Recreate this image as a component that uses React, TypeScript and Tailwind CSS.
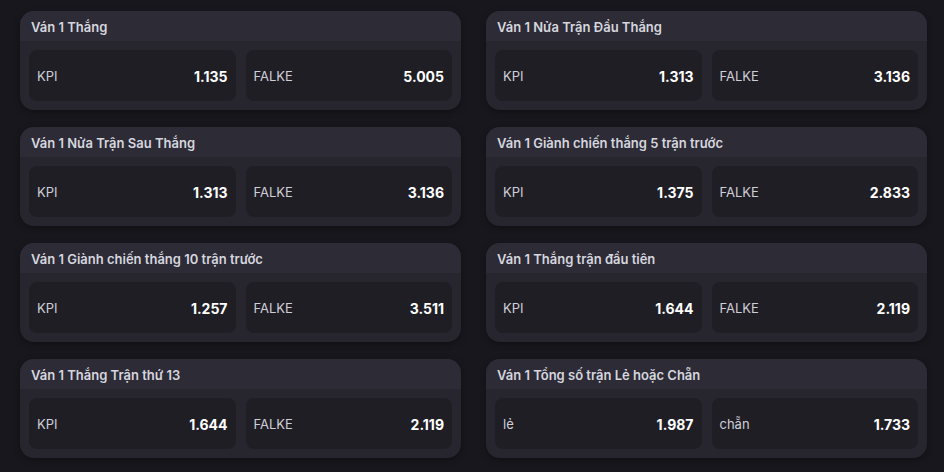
const markets = [
  { title: 'Ván 1 Thắng', odds: [['KPI', '1.135'], ['FALKE', '5.005']] },
  { title: 'Ván 1 Nửa Trận Đầu Thắng', odds: [['KPI', '1.313'], ['FALKE', '3.136']] },
  { title: 'Ván 1 Nửa Trận Sau Thắng', odds: [['KPI', '1.313'], ['FALKE', '3.136']] },
  { title: 'Ván 1 Giành chiến thắng 5 trận trước', odds: [['KPI', '1.375'], ['FALKE', '2.833']] },
  { title: 'Ván 1 Giành chiến thắng 10 trận trước', odds: [['KPI', '1.257'], ['FALKE', '3.511']] },
  { title: 'Ván 1 Thắng trận đầu tiên', odds: [['KPI', '1.644'], ['FALKE', '2.119']] },
  { title: 'Ván 1 Thắng Trận thứ 13', odds: [['KPI', '1.644'], ['FALKE', '2.119']] },
  { title: 'Ván 1 Tổng số trận Lẻ hoặc Chẵn', odds: [['lẻ', '1.987'], ['chẵn', '1.733']] },
]

export default function App() {
  return (
    <div
      className="min-h-[472px] w-[944px] bg-[#18171d] pl-5 pr-[17px] pt-[11px]"
      style={{ fontFamily: 'Inter, "Noto Sans", sans-serif' }}
    >
      <div className="grid grid-cols-2 gap-x-[25px] gap-y-[17px]">
        {markets.map((m, i) => (
          <div
            key={i}
            className="h-[99px] overflow-hidden rounded-[14px] bg-[#27262f] shadow-[0_2px_6px_rgba(0,0,0,0.35)]"
          >
            {/* header */}
            <div className="flex h-[30px] items-center bg-[#2c2b36] px-[11px] pt-[3px] text-[13px] font-semibold text-[#d6d6de]">
              {m.title}
            </div>
            <div className="grid grid-cols-2 gap-[10px] px-[9px] pt-[9px]">
              {m.odds.map(([label, value]) => (
                <div
                  key={label}
                  className="flex h-[51px] items-center justify-between rounded-[8px] bg-[#1f1e25] px-2 pt-[2px]"
                >
                  <span className="text-[13px] text-[#cfcfd8]">{label}</span>
                  <span className="text-[14px] font-bold text-white">{value}</span>
                </div>
              ))}
            </div>
          </div>
        ))}
      </div>
    </div>
  )
}
